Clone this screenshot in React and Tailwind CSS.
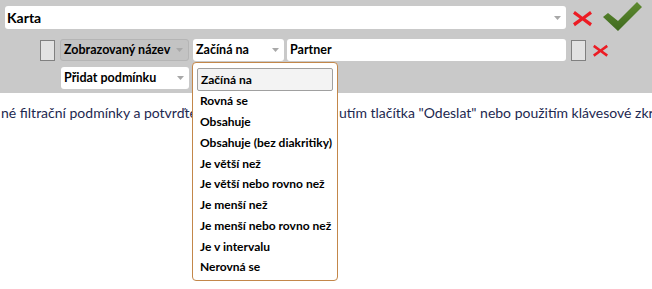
import React from 'react';

const font = { fontFamily: 'Lato, "Noto Sans", sans-serif' };

const options = [
  'Začíná na',
  'Rovná se',
  'Obsahuje',
  'Obsahuje (bez diakritiky)',
  'Je větší než',
  'Je větší nebo rovno než',
  'Je menší než',
  'Je menší nebo rovno než',
  'Je v intervalu',
  'Nerovná se',
];

function Caret() {
  return (
    <svg width="7" height="4" viewBox="0 0 7 4" className="shrink-0">
      <path d="M0 0 H7 L3.5 4 Z" fill="#a8a8a8" />
    </svg>
  );
}

function RedX({ size }) {
  return (
    <svg width={size} height={size * 0.9} viewBox="0 0 20 18">
      <path d="M2 1 L10 7 L18 1 L20 4 L13 9 L20 14 L18 17 L10 11 L2 17 L0 14 L7 9 L0 4 Z" fill="#ec1c24" />
    </svg>
  );
}

function Check() {
  return (
    <svg width="39" height="30" viewBox="0 0 39 30">
      <defs>
        <linearGradient id="g" x1="0" y1="0" x2="0" y2="1">
          <stop offset="0" stopColor="#5e8a30" />
          <stop offset="1" stopColor="#3f6a1e" />
        </linearGradient>
      </defs>
      <path d="M0 15 L5 11 L15 19 L34 0 L39 5 L15 29 Z" fill="url(#g)" />
    </svg>
  );
}

function Checkbox() {
  return <div className="w-[15px] h-[21px] bg-[#e2e2e2] border border-[#808080] shrink-0" />;
}

function Select({ label, className }) {
  return (
    <div className={`h-[22px] rounded-[3px] flex items-center justify-between pl-[3px] pr-[5px] text-[12.5px] font-bold text-black whitespace-nowrap ${className}`}>
      <span>{label}</span>
      <Caret />
    </div>
  );
}

export default function App() {
  return (
    <div className="relative w-[652px] h-[289px] bg-white overflow-hidden" style={font}>
      <div className="h-[93px] bg-[#c9c9c9] pt-[6px] pl-[5px]">
        <div className="flex items-center h-[23px]">
          <div className="w-[561px] h-[23px] bg-white rounded-[3px] flex items-center justify-between pl-[2px] pr-[5px] text-[14px] font-bold text-black">
            <span>Karta</span>
            <Caret />
          </div>
          <div className="ml-[7px] mt-[3px]">
            <RedX size={19} />
          </div>
          <div className="ml-[11px] -mt-[2px]">
            <Check />
          </div>
        </div>
        <div className="flex items-center mt-[10px] pl-[35px]">
          <Checkbox />
          <Select label="Zobrazovaný název" className="ml-[5px] w-[129px] bg-[#c3c3c3] border border-[#b5b5b5]" />
          <Select label="Začíná na" className="ml-[4px] w-[91px] bg-white" />
          <div className="ml-[3px] w-[279px] h-[22px] bg-white rounded-[3px] flex items-center pl-[3px] text-[12.5px] font-bold text-black">
            Partner
          </div>
          <div className="ml-[5px]">
            <Checkbox />
          </div>
          <div className="ml-[7px] mt-[1px]">
            <RedX size={15} />
          </div>
        </div>
        <div className="flex mt-[6px] pl-[56px]">
          <Select label="Přidat podmínku" className="w-[128px] bg-white" />
        </div>
      </div>
      <p className="mt-[9px] pl-[1px] whitespace-nowrap text-[14px] text-[#1d2850]">
        <span className="inline-block w-[338px] overflow-hidden align-top">né filtrační podmínky a potvrďte je buď stiskn</span>
        <span>utím tlačítka "Odeslat" nebo použitím klávesové zkratky</span>
      </p>
      <div className="absolute left-[192px] top-[62px] w-[146px] h-[219px] bg-white border border-[#c3874a] rounded-[4px] px-[4px] pt-[5px]">
        {options.map((o, i) => (
          <div
            key={o}
            className={`flex items-center pl-[3px] text-[12px] font-bold text-black whitespace-nowrap ${
              i === 0 ? 'h-[23px] bg-[#f3f3f3] border border-[#a0a0a0] rounded-[2px]' : 'h-[20.75px]'
            }`}
          >
            {o}
          </div>
        ))}
      </div>
    </div>
  );
}
